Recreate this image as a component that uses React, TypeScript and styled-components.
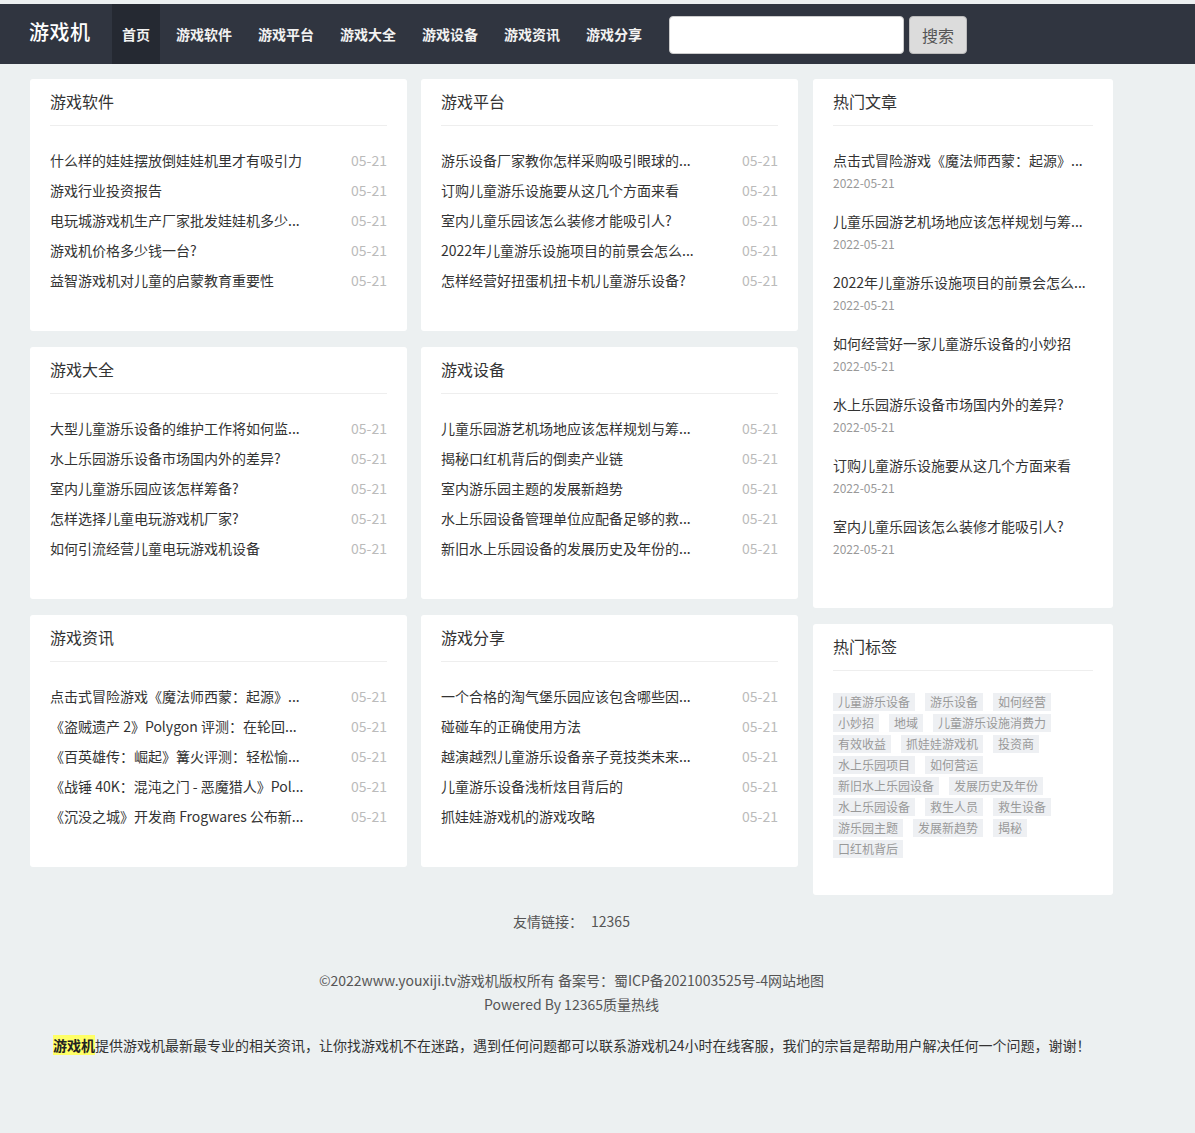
import { createGlobalStyle, styled } from "styled-components";

const GlobalStyle = createGlobalStyle`
  html, body {
    margin: 0;
    padding: 0;
    background: #ecf0f1;
  }
  body {
    font-family: "Noto Sans CJK SC", "Noto Sans", "Liberation Sans", sans-serif;
    color: #333;
  }
  * {
    box-sizing: border-box;
  }
`;

type Article = { title: string; date: string };

const NAV_ITEMS = ["首页", "游戏软件", "游戏平台", "游戏大全", "游戏设备", "游戏资讯", "游戏分享"];

const SECTIONS: { name: string; items: string[] }[] = [
  {
    name: "游戏软件",
    items: [
      "什么样的娃娃摆放倒娃娃机里才有吸引力",
      "游戏行业投资报告",
      "电玩城游戏机生产厂家批发娃娃机多少...",
      "游戏机价格多少钱一台?",
      "益智游戏机对儿童的启蒙教育重要性",
    ],
  },
  {
    name: "游戏平台",
    items: [
      "游乐设备厂家教你怎样采购吸引眼球的...",
      "订购儿童游乐设施要从这几个方面来看",
      "室内儿童乐园该怎么装修才能吸引人?",
      "2022年儿童游乐设施项目的前景会怎么...",
      "怎样经营好扭蛋机扭卡机儿童游乐设备?",
    ],
  },
  {
    name: "游戏大全",
    items: [
      "大型儿童游乐设备的维护工作将如何监...",
      "水上乐园游乐设备市场国内外的差异?",
      "室内儿童游乐园应该怎样筹备?",
      "怎样选择儿童电玩游戏机厂家?",
      "如何引流经营儿童电玩游戏机设备",
    ],
  },
  {
    name: "游戏设备",
    items: [
      "儿童乐园游艺机场地应该怎样规划与筹...",
      "揭秘口红机背后的倒卖产业链",
      "室内游乐园主题的发展新趋势",
      "水上乐园设备管理单位应配备足够的救...",
      "新旧水上乐园设备的发展历史及年份的...",
    ],
  },
  {
    name: "游戏资讯",
    items: [
      "点击式冒险游戏《魔法师西蒙：起源》...",
      "《盗贼遗产 2》Polygon 评测：在轮回...",
      "《百英雄传：崛起》篝火评测：轻松愉...",
      "《战锤 40K：混沌之门 - 恶魔猎人》Pol...",
      "《沉没之城》开发商 Frogwares 公布新...",
    ],
  },
  {
    name: "游戏分享",
    items: [
      "一个合格的淘气堡乐园应该包含哪些因...",
      "碰碰车的正确使用方法",
      "越演越烈儿童游乐设备亲子竞技类未来...",
      "儿童游乐设备浅析炫目背后的",
      "抓娃娃游戏机的游戏攻略",
    ],
  },
];

const HOT_ARTICLES: Article[] = [
  { title: "点击式冒险游戏《魔法师西蒙：起源》...", date: "2022-05-21" },
  { title: "儿童乐园游艺机场地应该怎样规划与筹...", date: "2022-05-21" },
  { title: "2022年儿童游乐设施项目的前景会怎么...", date: "2022-05-21" },
  { title: "如何经营好一家儿童游乐设备的小妙招", date: "2022-05-21" },
  { title: "水上乐园游乐设备市场国内外的差异?", date: "2022-05-21" },
  { title: "订购儿童游乐设施要从这几个方面来看", date: "2022-05-21" },
  { title: "室内儿童乐园该怎么装修才能吸引人?", date: "2022-05-21" },
];

const TAGS = [
  "儿童游乐设备",
  "游乐设备",
  "如何经营",
  "小妙招",
  "地域",
  "儿童游乐设施消费力",
  "有效收益",
  "抓娃娃游戏机",
  "投资商",
  "水上乐园项目",
  "如何营运",
  "新旧水上乐园设备",
  "发展历史及年份",
  "水上乐园设备",
  "救生人员",
  "救生设备",
  "游乐园主题",
  "发展新趋势",
  "揭秘",
  "口红机背后",
];

export default function App() {
  return (
    <>
      <GlobalStyle />
      <Page>
        <Header>
          <Logo>游戏机</Logo>
          <Nav>
            {NAV_ITEMS.map((item, i) => (
              <NavItem key={item} $active={i === 0}>
                {item}
              </NavItem>
            ))}
          </Nav>
          <SearchForm>
            <SearchInput type="text" />
            <SearchButton type="button">搜索</SearchButton>
          </SearchForm>
        </Header>

        <Container>
          <Main>
            <SectionGrid>
              {SECTIONS.map((section) => (
                <Card key={section.name}>
                  <CardTitle>{section.name}</CardTitle>
                  <NewsList>
                    {section.items.map((item) => (
                      <NewsRow key={item}>
                        <NewsTitle>{item}</NewsTitle>
                        <NewsDate>05-21</NewsDate>
                      </NewsRow>
                    ))}
                  </NewsList>
                </Card>
              ))}
            </SectionGrid>

            <Sidebar>
              <Card $bottom={48}>
                <CardTitle>热门文章</CardTitle>
                <HotList>
                  {HOT_ARTICLES.map((article) => (
                    <HotItem key={article.title}>
                      <HotTitle>{article.title}</HotTitle>
                      <HotDate>{article.date}</HotDate>
                    </HotItem>
                  ))}
                </HotList>
              </Card>
              <Card $bottom={34}>
                <CardTitle>热门标签</CardTitle>
                <TagCloud>
                  {TAGS.map((tag) => (
                    <Tag key={tag}>{tag}</Tag>
                  ))}
                </TagCloud>
              </Card>
            </Sidebar>
          </Main>

          <FriendLinks>
            友情链接：<FriendLink>12365</FriendLink>
          </FriendLinks>

          <Copyright>
            <p>©2022www.youxiji.tv游戏机版权所有 备案号：蜀ICP备2021003525号-4网站地图</p>
            <p>Powered By 12365质量热线</p>
          </Copyright>

          <About>
            <Mark>游戏机</Mark>
            提供游戏机最新最专业的相关资讯，让你找游戏机不在迷路，遇到任何问题都可以联系游戏机24小时在线客服，我们的宗旨是帮助用户解决任何一个问题，谢谢！
          </About>
        </Container>
      </Page>
    </>
  );
}

const Page = styled.div`
  padding-top: 4px;
  min-height: 1133px;
  background: #ecf0f1;
`;

const Header = styled.header`
  height: 60px;
  background: #303540;
  display: flex;
  align-items: center;
  padding-left: 29px;
`;

const Logo = styled.div`
  font-size: 20px;
  font-weight: 500;
  color: #fff;
  width: 83px;
  margin-bottom: 6px;
  letter-spacing: 0.5px;
`;

const Nav = styled.nav`
  display: flex;
  height: 100%;
  gap: 6px;
`;

const NavItem = styled.a<{ $active?: boolean }>`
  display: flex;
  align-items: center;
  padding: 0 10px;
  height: 100%;
  font-size: 14px;
  font-weight: 700;
  color: #f2f2f2;
  background: ${({ $active }) => ($active ? "#252932" : "transparent")};
  cursor: pointer;
`;

const SearchForm = styled.div`
  display: flex;
  gap: 5px;
  margin-left: 17px;
  margin-top: 2px;
`;

const SearchInput = styled.input`
  width: 235px;
  height: 38px;
  border: 1px solid #ccc;
  border-radius: 4px;
  background: #fff;
  outline: none;
`;

const SearchButton = styled.button`
  width: 58px;
  height: 38px;
  border: 1px solid #bbb;
  border-radius: 4px;
  background: #dcdcdc;
  color: #555;
  font-family: inherit;
  font-size: 16px;
`;

const Container = styled.div`
  width: 1083px;
  margin-left: 30px;
  padding-top: 15px;
`;

const Main = styled.div`
  display: flex;
  gap: 15px;
  align-items: flex-start;
`;

const SectionGrid = styled.div`
  display: grid;
  grid-template-columns: 377px 377px;
  gap: 16px 14px;
`;

const Sidebar = styled.aside`
  width: 300px;
  display: flex;
  flex-direction: column;
  gap: 16px;
`;

const Card = styled.section<{ $bottom?: number }>`
  background: #fff;
  border-radius: 3px;
  padding: 12px 20px ${({ $bottom }) => $bottom ?? 36}px;
`;

const CardTitle = styled.h3`
  margin: 0;
  font-size: 16px;
  font-weight: 400;
  line-height: 20px;
  color: #333;
  padding-bottom: 14px;
  border-bottom: 1px solid #eee;
`;

const NewsList = styled.ul`
  list-style: none;
  margin: 19px 0 0;
  padding: 0;
`;

const NewsRow = styled.li`
  display: flex;
  justify-content: space-between;
  align-items: center;
  height: 30px;
  font-size: 14px;
`;

const NewsTitle = styled.span`
  color: #333;
  white-space: nowrap;
`;

const NewsDate = styled.span`
  color: #bbb;
`;

const HotList = styled.ul`
  list-style: none;
  margin: 22px 0 0;
  padding: 0;
  display: flex;
  flex-direction: column;
  gap: 15px;
`;

const HotItem = styled.li`
  display: flex;
  flex-direction: column;
`;

const HotTitle = styled.span`
  font-size: 14px;
  line-height: 24px;
  color: #333;
  white-space: nowrap;
`;

const HotDate = styled.span`
  font-size: 12px;
  line-height: 22px;
  color: #999;
`;

const TagCloud = styled.div`
  margin-top: 22px;
  line-height: 21px;
  font-size: 12px;
`;

const Tag = styled.span`
  display: inline-block;
  line-height: 18px;
  padding: 0 5px;
  margin: 0 10px 3px 0;
  background: #eef0f3;
  color: #999;
  vertical-align: top;
`;

const FriendLinks = styled.div`
  margin-top: 16px;
  text-align: center;
  font-size: 14px;
  line-height: 20px;
  color: #555;
`;

const FriendLink = styled.a`
  margin-left: 8px;
  color: #555;
`;

const Copyright = styled.div`
  margin-top: 37px;
  text-align: center;
  font-size: 14px;
  color: #555;

  p {
    margin: 0;
    line-height: 24px;
  }
`;

const About = styled.p`
  margin: 19px 0 0;
  padding-left: 23px;
  font-size: 14px;
  line-height: 20px;
  color: #333;
  white-space: nowrap;
`;

const Mark = styled.b`
  background: #ffff66;
  color: #222;
`;
